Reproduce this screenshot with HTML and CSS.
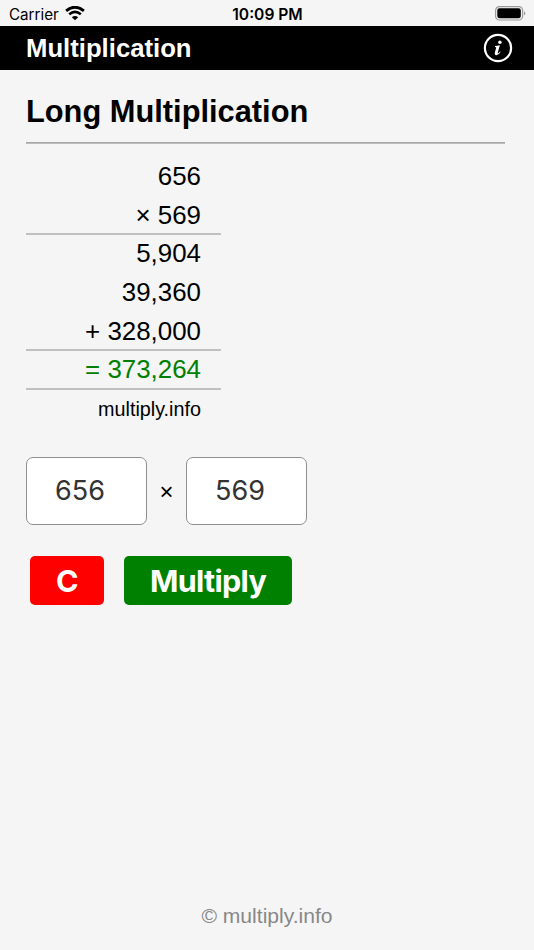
FILE: index.html
```
<!DOCTYPE html>
<html lang="en">
<head>
    <meta charset="UTF-8">
    <meta name="viewport" content="width=device-width, initial-scale=1.0">
    <title>Multiplication</title>
    <link rel="stylesheet" href="styles.css">
</head>
<body>

    <!-- Status Bar -->
    <div class="status-bar">
        <div class="carrier">
            <span>Carrier</span>
            <svg class="wifi" width="20" height="15" viewBox="0 0 20 15">
                <path d="M1.1 4.9 Q10 -2.5 18.9 4.9" fill="none" stroke="#000" stroke-width="2.8"/>
                <path d="M4.2 8.3 Q10 3.6 15.8 8.3" fill="none" stroke="#000" stroke-width="2.6"/>
                <path d="M10 14.3 L6.8 11.2 Q10 8.6 13.2 11.2 Z" fill="#000"/>
            </svg>
        </div>
        <span class="time">10:09 PM</span>
        <svg class="battery" width="31" height="15" viewBox="0 0 31 15">
            <rect x="0.6" y="0.6" width="27" height="13.4" rx="3.8" fill="none" stroke="#999" stroke-width="1.2"/>
            <rect x="2.3" y="2.3" width="23.5" height="10" rx="2.2" fill="#000"/>
            <path d="M29 5 Q31.6 7.3 29 9.6 Z" fill="#999"/>
        </svg>
    </div>

    <!-- Header -->
    <header class="header">
        <span class="header-title">Multiplication</span>
        <svg class="info-icon" width="30" height="30" viewBox="0 0 30 30">
            <circle cx="15" cy="15" r="13.1" fill="none" stroke="#fff" stroke-width="2.2"/>
            <circle cx="16.9" cy="9.3" r="1.7" fill="#fff"/>
            <path d="M12 13.1 Q14.3 12.5 16.9 12.2 L14.8 19.4 Q14.6 20.6 15.3 20.2 Q16.2 19.6 17 18.4 L17.7 18.8 Q15.7 22.3 13.3 22.2 Q11.2 21.8 11.9 19.2 L13.2 14.8 Q13.3 14 12 14 Z" fill="#fff"/>
        </svg>
    </header>

    <main class="content">
        <h1 class="title">Long Multiplication</h1>
        <hr class="divider">

        <!-- Worked Calculation -->
        <div class="calculation">
            <div class="row">656</div>
            <div class="row line">&times; 569</div>
            <div class="row">5,904</div>
            <div class="row">39,360</div>
            <div class="row line">+ 328,000</div>
            <div class="row line result">= 373,264</div>
            <div class="row site">multiply.info</div>
        </div>

        <!-- Number Inputs -->
        <div class="inputs">
            <input type="text" class="number" value="656">
            <span class="times">&times;</span>
            <input type="text" class="number" value="569">
        </div>

        <div class="buttons">
            <button type="button" class="btn btn-clear">C</button>
            <button type="button" class="btn btn-multiply">Multiply</button>
        </div>
    </main>

    <footer class="footer">&copy; multiply.info</footer>

</body>
</html>
```

FILE: styles.css
```
* {
    box-sizing: border-box;
}

body {
    display: flex;
    flex-direction: column;
    height: 100vh;
    margin: 0;
    background-color: #f5f5f5;
    color: #000;
    font-family: "Liberation Sans", Arial, sans-serif;
}

/* Status Bar */
.status-bar {
    display: grid;
    grid-template-columns: 1fr auto 1fr;
    align-items: center;
    height: 26px;
    padding: 2px 8px 0 9px;
    font-family: Inter, sans-serif;
    font-size: 15.2px;
}

.carrier {
    display: flex;
    align-items: center;
    gap: 6px;
}

.wifi {
    margin-top: -2px;
}

.time {
    font-size: 15.6px;
    font-weight: 600;
}

.battery {
    justify-self: end;
    margin-top: -2px;
}

/* Header */
.header {
    display: flex;
    justify-content: space-between;
    align-items: center;
    height: 44px;
    padding: 0 21px 0 26px;
    background-color: #000;
    color: #fff;
}

.header-title {
    font-size: 25.7px;
    font-weight: bold;
}

/* Content */
.content {
    flex: 1;
    padding: 24px 29px 0 26px;
}

.title {
    margin: 0;
    font-size: 30.8px;
    line-height: 36px;
}

.divider {
    height: 2px;
    margin: 12px 0 14px;
    border: 0;
    border-top: 1px solid #a6a6a6;
    border-bottom: 1px solid #bdbdbd;
}

.calculation {
    width: 195px;
    font-size: 25.9px;
    text-align: right;
}

.row {
    height: 38.7px;
    padding-right: 20px;
    line-height: 37.5px;
}

.line {
    border-bottom: 2px solid #c0c0c0;
}

.result {
    color: #008000;
}

.site {
    font-size: 19.8px;
    line-height: 38.5px;
}

/* Inputs */
.inputs {
    display: flex;
    align-items: center;
    margin-top: 28px;
}

.number {
    width: 121px;
    height: 68px;
    padding: 0 28px 1px;
    border: 1px solid #8e8e93;
    border-radius: 7px;
    background-color: #fff;
    color: #333;
    font-family: Inter, sans-serif;
    font-size: 27px;
}

.times {
    width: 39px;
    padding-top: 2px;
    font-size: 24px;
    text-align: center;
}

/* Buttons */
.buttons {
    display: flex;
    gap: 20px;
    margin: 31px 0 0 4px;
}

.btn {
    height: 49px;
    padding: 1px 0 0;
    border: 0;
    border-radius: 5px;
    color: #fff;
    font-family: Inter, sans-serif;
    font-size: 30.5px;
    font-weight: 700;
    letter-spacing: -0.7px;
}

.btn-clear {
    width: 74px;
    background-color: #ff0000;
}

.btn-multiply {
    width: 168px;
    background-color: #008000;
}

.footer {
    padding-bottom: 22px;
    color: #888;
    font-size: 21.1px;
    text-align: center;
}
```
